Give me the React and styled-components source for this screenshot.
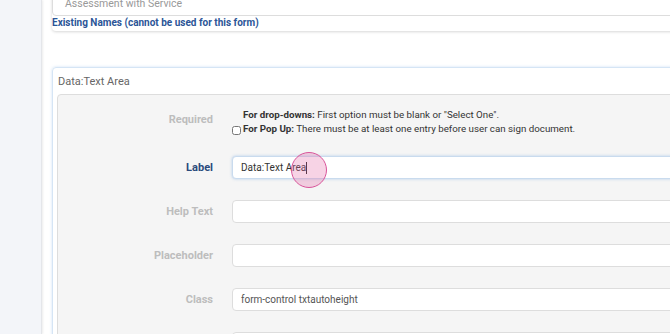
import React from 'react'
import styled, { createGlobalStyle } from 'styled-components'

const GlobalStyle = createGlobalStyle`
  body {
    margin: 0;
    font-family: Roboto, "Liberation Sans", Arial, sans-serif;
    background: #fff;
  }
`

const fields = [
  { label: 'Help Text', value: '' },
  { label: 'Placeholder', value: '' },
  { label: 'Class', value: 'form-control txtautoheight' },
  { label: '', value: '' },
]

const App = () => {
  return (
    <Page>
      <GlobalStyle />
      <Sidebar />
      <Main>
        <TopCard>
          <NameInput>Assessment with Service</NameInput>
          <ExistingNames>Existing Names (cannot be used for this form)</ExistingNames>
        </TopCard>

        <FieldCard>
          <CardTitle>Data:Text Area</CardTitle>
          <Panel>
            <Row tight>
              <FieldLabel top>Required</FieldLabel>
              <Note>
                <NoteLine indent>
                  <span><b>For drop-downs:</b> First option must be blank or "Select One".</span>
                </NoteLine>
                <NoteLine>
                  <Check type="checkbox" />
                  <span><b>For Pop Up:</b> There must be at least one entry before user can sign document.</span>
                </NoteLine>
              </Note>
            </Row>

            <Row>
              <FieldLabel active>Label</FieldLabel>
              <Input focused>
                Data:Text Area<Caret />
                <Touch />
              </Input>
            </Row>

            {fields.map((f, i) => (
              <Row key={i}>
                <FieldLabel>{f.label}</FieldLabel>
                <Input>{f.value}</Input>
              </Row>
            ))}
          </Panel>
        </FieldCard>
      </Main>
    </Page>
  )
}

const Page = styled.div`
  display: flex;
  height: 100vh;
  overflow: hidden;
`

const Sidebar = styled.div`
  width: 41px;
  flex-shrink: 0;
  background: #f3f5f9;
  border-right: 1px solid #e4e6ea;
  box-shadow: 1px 0 2px rgba(0, 0, 0, 0.08);
`

const Main = styled.div`
  flex: 1;
  padding-left: 10px;
  margin-top: -10px;
  margin-right: -20px;
`

const TopCard = styled.div`
  border-radius: 4px;
  box-shadow: 0 1px 3px rgba(0, 0, 0, 0.16);
  padding-bottom: 2px;
`

const NameInput = styled.div`
  height: 24px;
  border: 1px solid #ddd;
  border-radius: 4px;
  padding-left: 12px;
  display: flex;
  align-items: center;
  font-size: 10.5px;
  color: #999;
`

const ExistingNames = styled.div`
  font-size: 10px;
  font-weight: 700;
  color: #2b5597;
  line-height: 12px;
  margin-top: 1px;
`

const FieldCard = styled.div`
  margin-top: 36px;
  border: 1px solid #d5e5f5;
  border-radius: 4px;
  box-shadow: 0 0 3px rgba(120, 170, 225, 0.35);
  padding-left: 4px;
`

const CardTitle = styled.div`
  font-size: 11px;
  color: #666;
  line-height: 14px;
  padding: 7px 0 5px 1px;
`

const Panel = styled.div`
  background: #f5f5f5;
  border: 1px solid #ddd;
  border-radius: 4px;
  padding-top: 13px;
  display: flex;
  flex-direction: column;
  gap: 21px;
`

const Row = styled.div`
  display: grid;
  grid-template-columns: 155px 1fr;
  column-gap: 19px;
  align-items: center;
  margin-bottom: ${p => (p.tight ? '-1px' : '0')};
`

const FieldLabel = styled.div`
  text-align: right;
  font-size: 11px;
  font-weight: 700;
  line-height: 14px;
  color: ${p => (p.active ? '#2b4a7c' : '#bdbdbd')};
  align-self: ${p => (p.top ? 'start' : 'center')};
  padding-top: ${p => (p.top ? '5px' : '0')};
`

const Note = styled.div`
  font-size: 9.75px;
  color: #333;
  line-height: 14px;
`

const NoteLine = styled.div`
  display: flex;
  align-items: center;
  padding-left: ${p => (p.indent ? '11px' : '0')};
  white-space: nowrap;

  b {
    font-weight: 700;
  }
`

const Check = styled.input`
  width: 9px;
  height: 9px;
  margin: 3px 2px 0 0;
`

const Input = styled.div`
  position: relative;
  height: 21px;
  background: #fff;
  border: 1px solid ${p => (p.focused ? '#c9dbee' : '#ddd')};
  border-radius: 4px;
  box-shadow: ${p => (p.focused ? '0 0 3px rgba(102, 160, 225, 0.45)' : 'none')};
  padding-left: 8px;
  display: flex;
  align-items: center;
  font-size: 10px;
  color: ${p => (p.focused ? '#333' : '#555')};
`

const Caret = styled.span`
  display: inline-block;
  width: 1px;
  height: 12px;
  background: #222;
`

const Touch = styled.span`
  position: absolute;
  left: 58px;
  top: -5px;
  width: 34px;
  height: 34px;
  border-radius: 50%;
  border: 1.5px solid #d9549a;
  background: rgba(230, 110, 170, 0.3);
`

export default App
